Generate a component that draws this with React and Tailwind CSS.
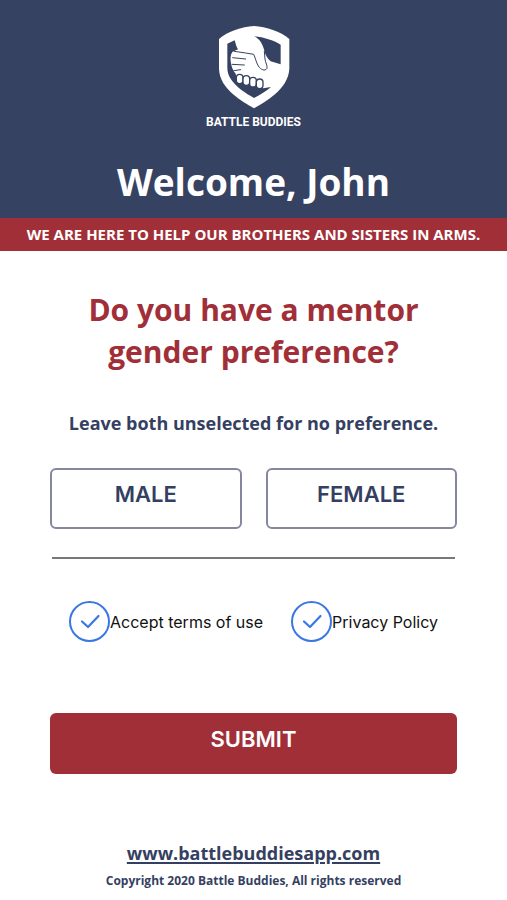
import { useState } from 'react';

export default function App() {
  const [gender, setGender] = useState(null);

  const toggleGender = (value) => setGender(gender === value ? null : value);

  return (
    <div className="min-h-screen bg-white font-['Open_Sans',sans-serif] text-[#353f62]">
      <header className="flex flex-col items-center bg-[#364261] pt-[25px] text-white">
        <ShieldLogo />
        <p className="font-['Roboto',sans-serif] text-xs leading-6 font-bold whitespace-nowrap">
          BATTLE BUDDIES
        </p>
        <h1 className="mt-5 pb-2 text-[37px] leading-[56px] font-bold">Welcome, John</h1>
      </header>
      <p className="bg-[#a12f38] text-center text-[15px] leading-[33px] font-bold text-white">
        WE ARE HERE TO HELP OUR BROTHERS AND SISTERS IN ARMS.
      </p>

      <main className="px-[50px] pt-[38px]">
        <h2 className="text-center text-3xl leading-[42px] font-bold text-[#a12f38]">
          Do you have a mentor
          <br />
          gender preference?
        </h2>
        <p className="mt-9 text-center text-lg leading-7 font-bold whitespace-nowrap">
          Leave both unselected for no preference.
        </p>

        <div className="mt-[31px] grid grid-cols-2 gap-6">
          <GenderButton selected={gender === 'male'} onClick={() => toggleGender('male')}>MALE</GenderButton>
          <GenderButton selected={gender === 'female'} onClick={() => toggleGender('female')}>FEMALE</GenderButton>
        </div>

        <hr className="mx-0.5 mt-7 border-t-2 border-[#77777c]" />

        <div className="mt-[42px] flex justify-center gap-7">
          <RoundCheckbox id="terms" label="Accept terms of use" />
          <RoundCheckbox id="privacy" label="Privacy Policy" />
        </div>

        <button
          type="submit"
          className="mt-[71px] h-[61px] w-full rounded-md bg-[#a12f38] pb-2 font-['Inter',sans-serif] text-[22px] font-semibold text-white"
        >
          SUBMIT
        </button>
      </main>

      <footer className="mt-[63px] text-center font-bold">
        <a href="#" className="text-lg leading-8 underline decoration-2 underline-offset-2">www.battlebuddiesapp.com</a>
        <p className="text-xs leading-6">Copyright 2020 Battle Buddies, All rights reserved</p>
      </footer>
    </div>
  );
}

function GenderButton({ selected, onClick, children }) {
  return (
    <button
      type="button"
      aria-pressed={selected}
      onClick={onClick}
      className={`h-[61px] rounded-md border-2 border-[#85879e] pb-2 font-['Inter',sans-serif] text-[22px] font-semibold ${
        selected ? 'bg-[#364261] text-white' : 'bg-white text-[#353f62]'
      }`}
    >
      {children}
    </button>
  );
}

function RoundCheckbox({ id, label }) {
  return (
    <div className="flex items-center">
      <span className="relative size-[41px] shrink-0">
        <input
          id={id}
          type="checkbox"
          defaultChecked
          className="peer size-full appearance-none rounded-full border-2 border-[#3977e3]"
        />
        <svg
          viewBox="0 0 41 41"
          className="pointer-events-none absolute inset-0 hidden peer-checked:block"
          fill="none"
          stroke="#3977e3"
          strokeWidth="2.2"
          strokeLinecap="round"
          strokeLinejoin="round"
        >
          <path d="M13 20.500l6 5.500 10.500-11" />
        </svg>
      </span>
      <label htmlFor={id} className="font-['Inter',sans-serif] text-base leading-6 whitespace-nowrap text-[#111]">
        {label}
      </label>
    </div>
  );
}

// Shield with two clasped hands
function ShieldLogo() {
  return (
    <svg viewBox="54 15 216 255" className="h-[85px] w-[72px]" aria-hidden="true">
      <path
        d="M162 18C125 21 83 34 57 57V146C58 177 75 202 101 224C119 239 141 253 162 265C183 253 205 239 223 224C249 202 266 177 268 146V57C241 34 199 21 162 18Z"
        fill="#fff"
      />
      <g fill="#364261">
        <path d="M82 71L104 61C107 70 108 79 114 88L98 95C92 103 91 112 92 123C93 137 98 151 107 161L112 184L190 205L213 201C199 213 181 224 162 234C136 220 110 202 95 181C86 168 82 157 82 143Z" />
        <path d="M163 49C192 52 220 61 242 74V133L212 124C201 114 196 104 193 92C188 73 181 59 163 49Z" />
      </g>
      <path d="M97 96C91 112 93 139 106 158L121 176L188 196L212 199L214 190L190 160L120 145Z" fill="#fff" />
      <g fill="#fff" stroke="#364261" strokeWidth="4">
        <rect x="109" y="163" width="20" height="28" rx="10" />
        <rect x="129" y="167" width="20" height="29" rx="10" />
        <rect x="149" y="172" width="20" height="29" rx="10" />
        <rect x="169" y="177" width="20" height="29" rx="10" />
      </g>
      <g fill="none" stroke="#364261" strokeWidth="3" strokeLinecap="round" strokeLinejoin="round">
        <path d="M103 94L137 99L161 103C166 113 168 126 175 138C182 149 195 155 201 145C203 137 196 128 195 117L193 94" />
        <path d="M98 113L137 117M96 133L133 135M101 152L122 149" />
      </g>
    </svg>
  );
}
